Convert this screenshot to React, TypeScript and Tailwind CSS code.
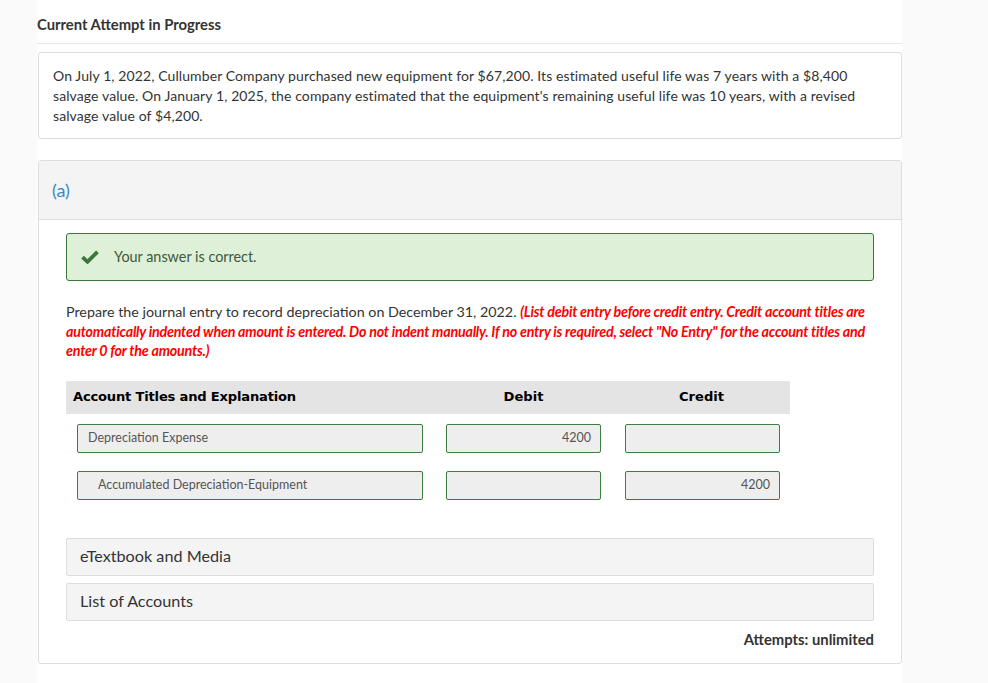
import React from "react";

const lato = { fontFamily: "Lato, 'Open Sans', sans-serif" };

function Field({ value, align = "left", indent = false, w }: { value: string; align?: "left" | "right"; indent?: boolean; w: string }) {
  return (
    <div
      className={`${w} h-[29px] bg-[#eeeeee] border border-[#3f7d3f] rounded-[2px] flex items-center text-[12.5px] text-[#555555] ${align === "right" ? "justify-end pr-[9px]" : indent ? "pl-[20px]" : "pl-[10px]"}`}
    >
      {value}
    </div>
  );
}

export default function App() {
  return (
    <div className="min-h-[683px] w-full bg-[#fafafa] flex" style={lato}>
      <div className="ml-[37px] w-[865px] bg-white pb-[20px]">
        <div className="h-[44px] border-b border-[#e8e8e8] flex items-center pt-[5px]">
          <span className="text-[14.8px] font-bold text-[#333333]">Current Attempt in Progress</span>
        </div>
        <div className="mt-[8px] ml-[1px] border border-[#dddddd] rounded-[3px] px-[14px] pt-[13px] pb-[12px] text-[14px] tracking-[0.1px] leading-[20px] text-[#333333]">
          On July 1, 2022, Cullumber Company purchased new equipment for $67,200. Its estimated useful life was 7 years with a $8,400
          salvage value. On January 1, 2025, the company estimated that the equipment's remaining useful life was 10 years, with a revised
          salvage value of $4,200.
        </div>
        <div className="mt-[21px] ml-[1px] border border-[#dddddd] rounded-[3px] h-[504px]">
          <div className="h-[59px] bg-[#f4f4f4] border-b border-[#dddddd] flex items-center pl-[13px]">
            <span className="text-[18px] text-[#3b86c0]">(a)</span>
          </div>
          <div className="px-[27px] pt-[13px]">
            <div className="h-[48px] bg-[#dff0d8] border border-[#3c763d] rounded-[3px] flex items-center pl-[14px]">
              <svg width="18" height="14" viewBox="0 0 18 14" className="mr-[15px]">
                <path d="M1.5 7.2 L6.5 11.8 L16.5 1.8" fill="none" stroke="#3c763d" strokeWidth="3.8" strokeLinejoin="miter" />
              </svg>
              <span className="text-[14.4px] text-[#3c5a3c]">Your answer is correct.</span>
            </div>
            <p className="mt-[21px] text-[14.3px] leading-[19.5px] text-[#333333] w-[807px]">
              Prepare the journal entry to record depreciation on December 31, 2022.{" "}
              <em className="text-[#ff0000] font-bold tracking-[-0.22px]">
                (List debit entry before credit entry. Credit account titles are automatically indented when amount is entered. Do not indent manually. If no entry is required, select "No Entry" for the account titles and enter 0 for the amounts.)
              </em>
            </p>
            <div className="mt-[20px] w-[724px]">
              <div
                className="grid grid-cols-[368px_179px_177px] h-[33px] bg-[#e4e4e4] items-center font-bold text-black"
                style={{ fontFamily: "'DejaVu Sans', Verdana, sans-serif", fontSize: "13.1px" }}
              >
                <div className="pl-[7px] tracking-[-0.2px]">Account Titles and Explanation</div>
                <div className="text-center">Debit</div>
                <div className="text-center">Credit</div>
              </div>
              <div className="grid grid-cols-[368px_179px_177px] mt-[10px]">
                <div className="pl-[11px]"><Field w="w-[346px]" value="Depreciation Expense" /></div>
                <div className="pl-[12px]"><Field w="w-[155px]" value="4200" align="right" /></div>
                <div className="pl-[12px]"><Field w="w-[155px]" value="" /></div>
              </div>
              <div className="grid grid-cols-[368px_179px_177px] mt-[18px]">
                <div className="pl-[11px]"><Field w="w-[346px]" value="Accumulated Depreciation-Equipment" indent /></div>
                <div className="pl-[12px]"><Field w="w-[155px]" value="" /></div>
                <div className="pl-[12px]"><Field w="w-[155px]" value="4200" align="right" /></div>
              </div>
            </div>
            <div className="mt-[38px] h-[38px] bg-[#f4f4f4] border border-[#dddddd] rounded-[2px] flex items-center pl-[13px] text-[16.2px] text-[#333333]">
              eTextbook and Media
            </div>
            <div className="mt-[7px] h-[38px] bg-[#f4f4f4] border border-[#dddddd] rounded-[2px] flex items-center pl-[13px] text-[16.2px] text-[#333333]">
              List of Accounts
            </div>
            <div className="mt-[7px] text-right text-[14.8px] font-bold text-[#333333]">Attempts: unlimited</div>
          </div>
        </div>
      </div>
    </div>
  );
}
